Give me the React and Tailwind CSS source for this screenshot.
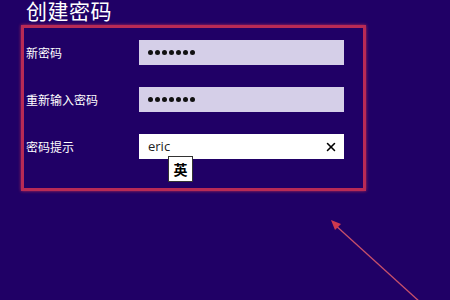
import { X } from 'lucide-react';

const cjk = { fontFamily: '"Noto Sans CJK SC", "Noto Sans", sans-serif' };

// 密码圆点
const Dots = ({ count }) => (
  <div className="flex items-center gap-[2px]">
    {Array.from({ length: count }).map((_, i) => (
      <span key={i} className="block w-[5px] h-[5px] rounded-full bg-[#111]" />
    ))}
  </div>
);

const Row = ({ label, children }) => (
  <div className="flex items-center h-[25px]">
    <div className="w-[115px] pl-[2px] text-[12px] text-white leading-none" style={cjk}>
      {label}
    </div>
    {children}
  </div>
);

export default function App() {
  return (
    <div className="relative w-[450px] h-[300px] overflow-hidden bg-[#200066]" style={cjk}>
      <div className="h-[27px] pl-[26px]">
        <h1 className="-mt-[2px] text-[21px] leading-[24px] text-white font-normal tracking-[0.5px]">创建密码</h1>
      </div>

      <div className="ml-[21px] w-[345px] h-[166px] border-[3px] border-[#b82a55] shadow-[0_0_3px_#b82a55] pt-[12px] flex flex-col gap-[22px]">
        <Row label="新密码">
          <div className="w-[205px] h-[25px] bg-[#d5cfe8] flex items-center pl-[9px]">
            <Dots count={7} />
          </div>
        </Row>
        <Row label="重新输入密码">
          <div className="w-[205px] h-[25px] bg-[#d5cfe8] flex items-center pl-[9px]">
            <Dots count={7} />
          </div>
        </Row>
        <Row label="密码提示">
          <div className="relative w-[205px] h-[25px] bg-white flex items-center justify-between pl-[9px] pr-[6px]">
            <span className="text-[13px] text-[#222] leading-none" style={{ fontFamily: '"Open Sans", "Noto Sans", sans-serif' }}>eric</span>
            <X className="w-[14px] h-[14px] text-black" strokeWidth={2.6} />
            <div className="absolute left-[29px] top-[22px] w-[25px] h-[26px] bg-white border border-[#333] flex items-center justify-center text-[14px] font-bold text-black">
              英
            </div>
          </div>
        </Row>
      </div>

      {/* 红色箭头 */}
      <svg className="absolute left-0 top-0" width="450" height="300" viewBox="0 0 450 300">
        <line x1="334" y1="224" x2="420" y2="302" stroke="#c8506a" strokeWidth="1.3" />
        <polygon points="331,220 341,224 335,230" fill="#d0384e" />
      </svg>
    </div>
  );
}
